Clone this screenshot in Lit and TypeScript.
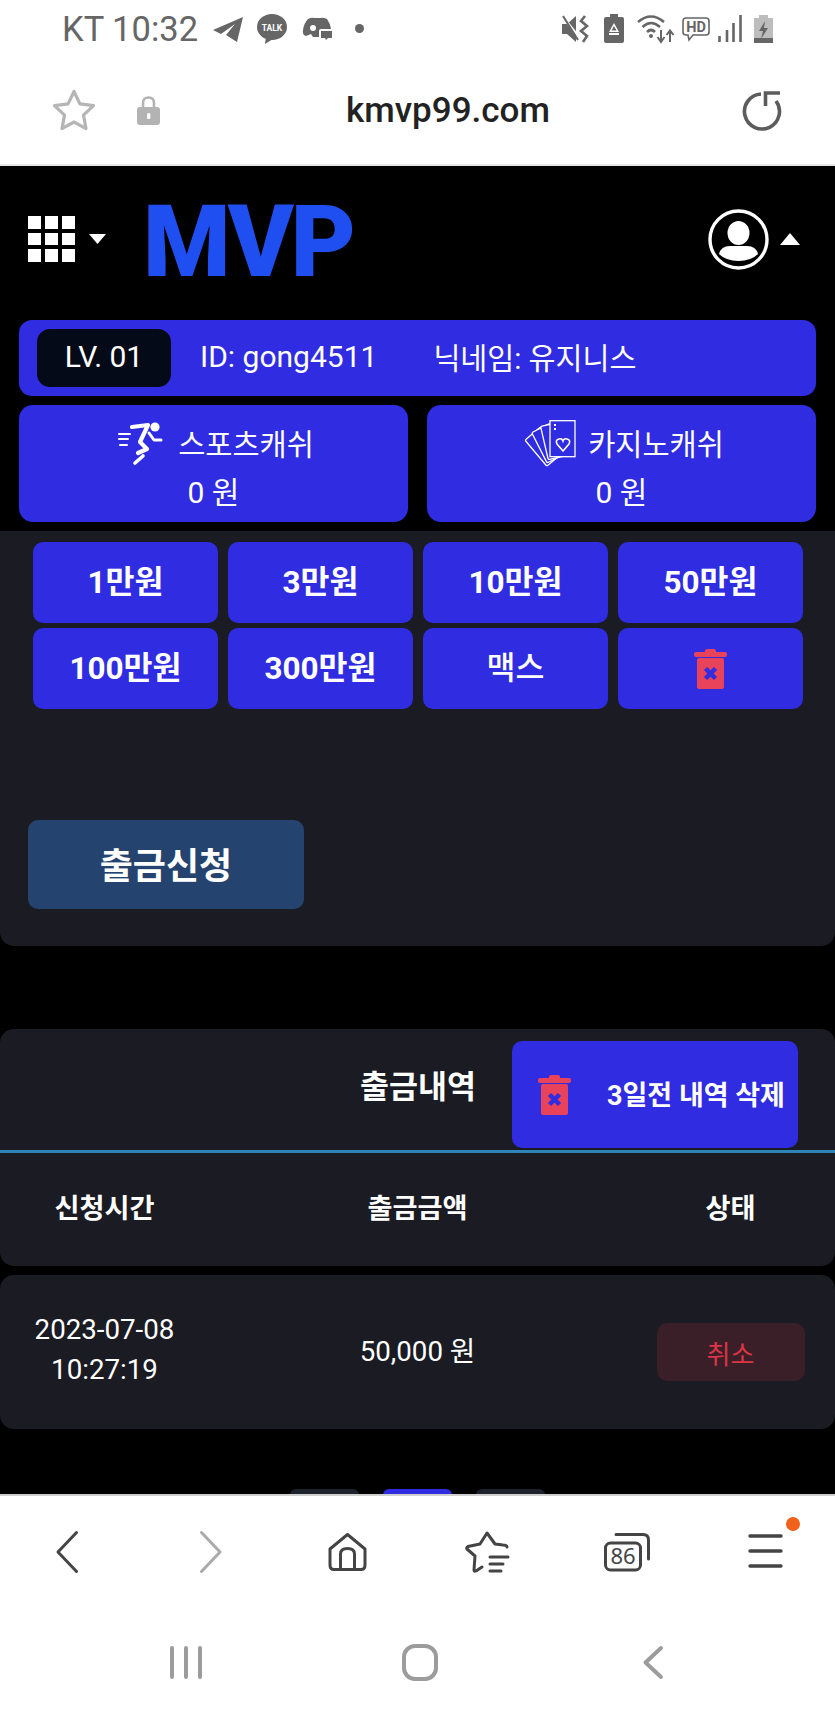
import { LitElement, html, css, svg } from "lit";
import { customElement } from "lit/decorators.js";

const trash = (cls: string) => html`<svg class=${cls} width="33" height="40" viewBox="0 0 33 40">
  <rect x="11" y="0" width="11" height="5" rx="2" fill="#e8435a"/>
  <rect x="0" y="3" width="33" height="5" rx="2" fill="#e8435a"/>
  <rect x="3" y="9" width="27" height="31" rx="2" fill="#e8435a"/>
  <path d="M11.5 19.5 L21.5 29.5 M21.5 19.5 L11.5 29.5" stroke="#302ce1" stroke-width="4.5" fill="none"/>
</svg>`;

const card = (r: number) => svg`<rect x="25" y="3" width="21" height="34" rx="1.5" fill="#302ce1" stroke="#fff" stroke-width="1.3" transform="rotate(${r} 36 46)"/>`;

@customElement("app-root")
export class AppRoot extends LitElement {
  static styles = css`
    :host { display: block; font-family: Roboto, "Noto Sans CJK KR", sans-serif; color: #fff; }
    * { box-sizing: border-box; }
    svg { display: block; flex: none; overflow: visible; }
    .page { height: 1717px; display: flex; flex-direction: column; background: #000; overflow: hidden; }

    .status { height: 57px; flex: none; background: #fff; display: flex; align-items: center; padding: 0 62px 0 62px; color: #666; }
    .clock { font-size: 34.5px; line-height: 40px; margin-right: 15px; white-space: nowrap; }
    .s14 { margin-left: 14px; } .s16 { margin-left: 16px; } .s23 { margin-left: 23px; }
    .sp { margin-left: auto; } .s13 { margin-left: 13px; } .s8 { margin-left: 8px; } .s12 { margin-left: 12px; }

    .address { height: 109px; flex: none; background: #fff; border-bottom: 2px solid #e6e6e6; display: flex; align-items: center; padding: 0 53px 0 52px; }
    .lock { margin-left: 41px; }
    .url { margin-left: 186px; font-size: 35px; line-height: 44px; font-weight: 500; color: #222; white-space: nowrap; }
    .reload { margin-left: auto; }

    .main { flex: 1; min-height: 0; overflow: hidden; display: flex; flex-direction: column; }
    .head { height: 154px; flex: none; display: flex; align-items: center; padding: 0 35px 8px 28px; }
    .drop { margin-left: 14px; }
    .logo { margin: 5px 0 0 37px; font-size: 100px; line-height: 72px; font-weight: 900; color: #1f4ff0; letter-spacing: -3px; }
    .avatar { margin-left: auto; }
    .up { margin-left: 11px; }

    .user { flex: none; padding: 0 19px; display: flex; flex-direction: column; gap: 9px; }
    .bar { height: 76px; background: #302ce1; border-radius: 13px; display: flex; align-items: center; padding-left: 18px; font-size: 30px; }
    .lv { width: 134px; height: 58px; background: #050a18; border-radius: 13px; display: flex; align-items: center; justify-content: center; padding-bottom: 3px; }
    .uid { margin-left: 29px; padding-bottom: 4px; }
    .nick { margin-left: 56px; font-size: 29.3px; padding-bottom: 4px; }
    .cards { display: grid; grid-template-columns: 389px 389px; gap: 19px; }
    .cash { height: 117px; background: #302ce1; border-radius: 14px; display: flex; flex-direction: column; align-items: center; font-size: 29.5px; }
    .cash-top { height: 76px; display: flex; align-items: center; gap: 12px; padding-left: 6px; }
    .cash-top.run { gap: 17px; padding-left: 5px; }
    .cash-top span { padding-bottom: 2px; }
    .cash-val { line-height: 34px; margin-top: -5px; font-size: 30px; }

    .panel { flex: none; margin-top: 9px; height: 415px; background: #1a1b23; border-radius: 0 0 14px 14px; padding: 11px 32px 0 33px; }
    .amounts { display: grid; grid-template-columns: repeat(4, 185px); grid-auto-rows: 81px; gap: 5px 10px; }
    .amt { background: #302ce1; border-radius: 10px; display: flex; align-items: center; justify-content: center; font-size: 31.5px; font-weight: 700; padding-bottom: 8px; }
    .amt.plain { font-weight: 500; }
    .amt.icon { padding: 0; }
    .blurred { filter: blur(0.6px); }
    .submit { margin: 111px 0 0 -5px; width: 276px; height: 89px; background: #24446f; border-radius: 10px; display: flex; align-items: center; justify-content: center; font-size: 36px; font-weight: 700; padding-bottom: 4px; }

    .history { flex: none; margin-top: 83px; height: 237px; background: #1a1b23; border-radius: 14px; display: flex; flex-direction: column; }
    .h-top { height: 121px; display: flex; align-items: flex-start; justify-content: flex-end; padding: 12px 37px 0 0; }
    .h-title { font-size: 31.5px; font-weight: 700; line-height: 40px; margin: 27px 36px 0 0; }
    .del { width: 286px; height: 107px; background: #302ce1; border-radius: 10px; display: flex; align-items: center; padding-left: 26px; font-size: 27px; font-weight: 700; white-space: nowrap; }
    .del span { margin-left: 36px; padding-bottom: 3px; }
    .line { height: 3px; background: #2e86b8; flex: none; }
    .cols { display: grid; grid-template-columns: 209px 417px 209px; align-items: center; justify-items: center; text-align: center; }
    .h-cols { flex: 1; font-size: 27.2px; font-weight: 700; padding-bottom: 7px; }
    .row { flex: none; margin-top: 9px; height: 154px; background: #1a1b23; border-radius: 14px; font-size: 27.7px; padding-bottom: 7px; }
    .when { line-height: 40px; padding-top: 3px; }
    .cancel { width: 148px; height: 58px; margin-top: 7px; background: #3a1e28; border-radius: 10px; color: #dc3545; display: flex; align-items: center; justify-content: center; font-size: 26px; }
    .pager { flex: none; margin-top: 60px; display: flex; justify-content: center; gap: 24px; }
    .pager div { width: 69px; height: 24px; background: #1d222c; border-radius: 6px 6px 0 0; }
    .pager .on { background: #302ce1; }

    .tools { height: 113px; flex: none; background: #fff; border-top: 2px solid #d0d0d0; display: flex; align-items: center; padding-left: 56px; position: relative; }
    .t1 { margin-left: 122px; } .t2 { margin-left: 106px; } .t3 { margin-left: 98px; } .t4 { margin-left: 96px; } .t5 { margin-left: 98px; }
    .dot { position: absolute; left: 786px; top: 21px; width: 14px; height: 14px; border-radius: 50%; background: #f0611a; }
    .nav { height: 110px; flex: none; background: #fff; display: flex; align-items: center; padding: 0 0 0 170px; }
    .n1 { margin-left: 200px; } .n2 { margin-left: 205px; }
  `;

  render() {
    return html`<div class="page">
      <div class="status">
        <span class="clock">KT 10:32</span>
        <svg width="30" height="26" viewBox="0 0 30 26"><path d="M0 14 L30 1 L24 26 L13 19 L22 8 L8 18 Z" fill="#666"/></svg>
        <svg class="s14" width="30" height="30" viewBox="0 0 30 30"><ellipse cx="15" cy="13" rx="15" ry="13" fill="#666"/><path d="M9 23 L8 30 L16 25 Z" fill="#666"/><text x="15" y="16.5" text-anchor="middle" font-size="8.5" font-weight="700" fill="#fff" font-family="Roboto">TALK</text></svg>
        <svg class="s16" width="29" height="23" viewBox="0 0 29 23"><path d="M5 2 Q9 0 11 1 L17 1 Q20 0 24 2 Q27 6 28 12 L18 12 Q16 12 16 14 L16 20 L10 20 L8 17 L3 19 Q-1 18 0 13 Q1 6 5 2 Z" fill="#666"/><circle cx="10" cy="11" r="3" fill="#fff"/><path d="M18 14 H29 V21 H25 L23 23 L22 21 H18 Z" fill="#666"/></svg>
        <svg class="s23" width="9" height="9" viewBox="0 0 9 9"><circle cx="4.5" cy="4.5" r="4.5" fill="#666"/></svg>

        <svg class="sp" width="28" height="28" viewBox="0 0 28 28"><path d="M0 9 H5 L14 1 V27 L5 19 H0 Z" fill="#666"/><path d="M1 2 L17 22" stroke="#fff" stroke-width="2.5"/><path d="M1 1 L16 25" stroke="#666" stroke-width="2"/><path d="M23 1 L19 6 L25 11 L19 16 L25 21 L21 27" stroke="#666" stroke-width="2.6" fill="none"/></svg>
        <svg class="s14" width="20" height="29" viewBox="0 0 20 29"><path d="M6 0 H14 V3 H18 Q20 3 20 5 V27 Q20 29 18 29 H2 Q0 29 0 27 V5 Q0 3 2 3 H6 Z" fill="#666"/><path d="M10 9 L15 18 L5 18 Z M10 12 L7.5 16.5 H12.5 Z" fill="#fff" fill-rule="evenodd"/><path d="M5 20 H15" stroke="#fff" stroke-width="2"/></svg>
        <svg class="s13" width="37" height="28" viewBox="0 0 37 28"><path d="M1 7 Q14 -4 27 7 M5.5 12 Q14 4 23 12 M10 17 Q14 13 18 17" stroke="#666" stroke-width="2.6" fill="none"/><circle cx="14" cy="21" r="2" fill="#666"/><path d="M24 15 V26 M20.5 22 L24 27 L27.5 22 M33 27 V17 M29.5 20 L33 15.5 L36.5 20" stroke="#666" stroke-width="2" fill="none"/></svg>
        <svg class="s8" width="28" height="24" viewBox="0 0 28 24"><path d="M4 1 H24 Q27 1 27 4 V15 Q27 18 24 18 H11 L7 23 L6 18 H4 Q1 18 1 15 V4 Q1 1 4 1 Z" stroke="#666" stroke-width="1.6" fill="#fff"/><text x="14" y="15" text-anchor="middle" font-size="14.5" font-weight="700" fill="#666" font-family="Roboto">HD</text></svg>
        <svg class="s8" width="24" height="27" viewBox="0 0 24 27"><path d="M1.5 21 V27 M9 15 V27 M15.5 8 V27 M22.5 0 V27" stroke="#666" stroke-width="2.6" fill="none"/></svg>
        <svg class="s12" width="19" height="28" viewBox="0 0 19 28"><path d="M5 0 H14 V3 H19 V28 H0 V3 H5 Z" fill="#bdbdbd"/><rect x="0" y="23" width="19" height="5" fill="#666"/><path d="M11 6 L5 16 H9 L7 24 L14 13 H10 Z" fill="#666"/></svg>
      </div>

      <div class="address">
        <svg width="44" height="43" viewBox="0 0 44 43"><path d="M22 2.5 L27.9 14.9 L41.5 16.7 L31.5 26.1 L34 39.6 L22 33 L10 39.6 L12.5 26.1 L2.5 16.7 L16.1 14.9 Z" fill="none" stroke="#b5b5b5" stroke-width="3.2" stroke-linejoin="round"/></svg>
        <svg class="lock" width="23" height="29" viewBox="0 0 23 29"><path d="M6 12 V7 Q6 1.5 11.5 1.5 Q17 1.5 17 7 V12" fill="none" stroke="#b3b3b3" stroke-width="2.6"/><rect x="0" y="11" width="23" height="18" rx="3" fill="#b3b3b3"/><rect x="10" y="17" width="3.4" height="6" rx="1.5" fill="#fff"/></svg>
        <span class="url">kmvp99.com</span>
        <svg class="reload" width="42" height="39" viewBox="0 0 42 39"><path d="M21 3 A17.5 17.5 0 1 0 36 10" fill="none" stroke="#5c5c5c" stroke-width="3.6"/><path d="M40 2 H25.5 V15" fill="none" stroke="#5c5c5c" stroke-width="3.6"/></svg>
      </div>

      <div class="main">
        <div class="head">
          <svg width="47" height="46" viewBox="0 0 47 46" fill="#fff">
            <rect x="0" y="0" width="13" height="13"/><rect x="17" y="0" width="13" height="13"/><rect x="34" y="0" width="13" height="13"/>
            <rect x="0" y="17" width="13" height="12"/><rect x="17" y="17" width="13" height="12"/><rect x="34" y="17" width="13" height="12"/>
            <rect x="0" y="33" width="13" height="13"/><rect x="17" y="33" width="13" height="13"/><rect x="34" y="33" width="13" height="13"/>
          </svg>
          <svg class="drop" width="17" height="10" viewBox="0 0 17 10"><path d="M0 0 H17 L8.5 10 Z" fill="#fff"/></svg>
          <span class="logo">MVP</span>
          <svg class="avatar" width="61" height="61" viewBox="0 0 61 61"><circle cx="30.5" cy="30.5" r="28.5" fill="none" stroke="#fff" stroke-width="3.4"/><ellipse cx="30.5" cy="24" rx="11" ry="12" fill="#fff"/><path d="M11 45 Q13 37 22 37 H39 Q48 37 50 45 Q43 52 30.5 52 Q18 52 11 45 Z" fill="#fff"/></svg>
          <svg class="up" width="20" height="12" viewBox="0 0 20 12"><path d="M10 0 L20 12 H0 Z" fill="#fff"/></svg>
        </div>

        <div class="user">
          <div class="bar">
            <div class="lv">LV. 01</div>
            <span class="uid">ID: gong4511</span>
            <span class="nick">닉네임: 유지니스</span>
          </div>
          <div class="cards">
            <div class="cash">
              <div class="cash-top run">
                <svg width="43" height="42" viewBox="0 0 43 42" fill="none" stroke="#fff" stroke-linecap="round" stroke-linejoin="round">
                  <circle cx="37" cy="5" r="4.6" fill="#fff" stroke="none"/>
                  <path d="M14 5 L30 3 L22 20 L29 27 L20 31" stroke-width="4.2"/>
                  <path d="M31 11 L36 18 L43 18" stroke-width="3"/>
                  <path d="M25 34 L17 41" stroke-width="3.6"/>
                  <path d="M1 12 H12 M1 17 H10 M2 23 H9" stroke-width="2"/>
                </svg>
                <span>스포츠캐쉬</span>
              </div>
              <div class="cash-val">0 원</div>
            </div>
            <div class="cash">
              <div class="cash-top">
                <svg width="51" height="46" viewBox="0 0 51 46">
                  ${card(-40)}${card(-27)}${card(-13)}
                  <rect x="25" y="0.7" width="25" height="36" fill="#302ce1" stroke="#fff" stroke-width="1.3"/>
                  <path d="M38 31 L32 24 Q30 20 34 19 Q37 18 38 21 Q39 18 42 19 Q46 20 44 24 Z" fill="none" stroke="#fff" stroke-width="1.6"/>
                  <path d="M29 5 H31 M29 9 H31" stroke="#fff" stroke-width="2"/>
                </svg>
                <span>카지노캐쉬</span>
              </div>
              <div class="cash-val">0 원</div>
            </div>
          </div>
        </div>

        <div class="panel">
          <div class="amounts">
            <div class="amt">1만원</div><div class="amt">3만원</div><div class="amt">10만원</div><div class="amt">50만원</div>
            <div class="amt">100만원</div><div class="amt">300만원</div><div class="amt plain">맥스</div>
            <div class="amt icon">${trash("blurred")}</div>
          </div>
          <div class="submit">출금신청</div>
        </div>

        <div class="history">
          <div class="h-top">
            <div class="h-title">출금내역</div>
            <div class="del">${trash("blurred")}<span>3일전 내역 삭제</span></div>
          </div>
          <div class="line"></div>
          <div class="cols h-cols"><div>신청시간</div><div>출금금액</div><div>상태</div></div>
        </div>

        <div class="cols row">
          <div class="when">2023-07-08<br />10:27:19</div>
          <div>50,000 원</div>
          <div class="cancel">취소</div>
        </div>

        <div class="pager"><div></div><div class="on"></div><div></div></div>
      </div>

      <div class="tools">
        <svg width="22" height="42" viewBox="0 0 22 42"><path d="M20.5 1.5 L2 21 L20.5 40.5" fill="none" stroke="#444" stroke-width="3" stroke-linecap="round" stroke-linejoin="round"/></svg>
        <svg class="t1" width="22" height="42" viewBox="0 0 22 42"><path d="M1.5 1.5 L20 21 L1.5 40.5" fill="none" stroke="#aaa" stroke-width="3" stroke-linecap="round" stroke-linejoin="round"/></svg>
        <svg class="t2" width="39" height="38" viewBox="0 0 39 38" fill="none" stroke="#444" stroke-width="3" stroke-linejoin="round"><path d="M19.5 1.5 L37 16 V32 Q37 36.5 33 36.5 H6 Q2 36.5 2 32 V16 Z"/><path d="M12.5 36 V21 Q12.5 15.5 19.5 15.5 Q26.5 15.5 26.5 21 V36"/></svg>
        <svg class="t3" width="43" height="42" viewBox="0 0 43 42" fill="none" stroke="#444" stroke-width="3" stroke-linecap="round" stroke-linejoin="round"><path d="M42 16 Q42 14 38 14 L30 13 L22 2 L15 13 L3 15.5 Q1 17 2 18 L10 25 L9 39 Q9 41 11 40 L17 36"/><path d="M25 26 H43 M25 33 H38 M25 40 H36"/></svg>
        <svg class="t4" width="46" height="38" viewBox="0 0 46 38" fill="none" stroke="#444" stroke-linecap="round"><rect x="1.5" y="10" width="35" height="27" rx="5" stroke-width="3"/><path d="M12 1.5 H39 Q44.5 1.5 44.5 7 V26" stroke-width="3"/><text x="19" y="31" text-anchor="middle" font-size="22" fill="#444" stroke="none" font-family="'Noto Sans', sans-serif">86</text></svg>
        <svg class="t5" width="35" height="35" viewBox="0 0 35 35"><path d="M2 2 H33 M2 17 H33 M2 32 H33" stroke="#444" stroke-width="3.4" stroke-linecap="round"/></svg>
        <div class="dot"></div>
      </div>
      <div class="nav">
        <svg width="32" height="33" viewBox="0 0 32 33"><path d="M2 2 V31 M16 2 V31 M30 2 V31" stroke="#9c9c9c" stroke-width="4" stroke-linecap="round"/></svg>
        <svg class="n1" width="36" height="37" viewBox="0 0 36 37"><rect x="2" y="2" width="32" height="33" rx="11" fill="none" stroke="#9c9c9c" stroke-width="4"/></svg>
        <svg class="n2" width="20" height="33" viewBox="0 0 20 33"><path d="M18 2 L2.5 16.5 L18 31" fill="none" stroke="#9c9c9c" stroke-width="4" stroke-linecap="round" stroke-linejoin="round"/></svg>
      </div>
    </div>`;
  }
}
